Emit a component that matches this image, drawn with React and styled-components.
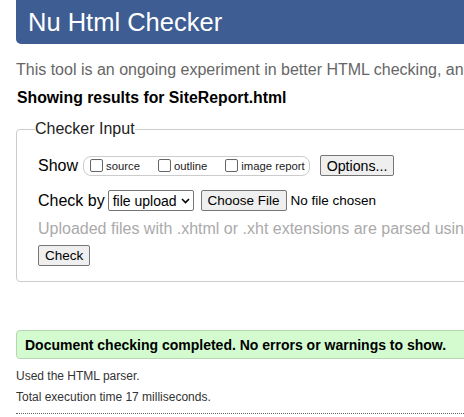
import React from "react";
import styled, { createGlobalStyle } from "styled-components";

const GlobalStyle = createGlobalStyle`
  html, body {
    margin: 0;
    padding: 0;
    background: #fff;
    overflow: hidden;
  }
  body {
    font-family: "Liberation Sans", Arial, sans-serif;
    color: #000;
  }
`;

const Page = styled.div`
  width: 640px;
  padding: 0 0 0 16px;
`;

const Header = styled.h1`
  margin: 0;
  height: 44px;
  padding: 0 12px;
  display: flex;
  align-items: center;
  background: #3e5d92;
  color: #fff;
  font-size: 25.5px;
  font-weight: normal;
  border-radius: 0 0 0 5px;
`;

const Intro = styled.p`
  margin: 17px 0 0;
  font-size: 16px;
  color: #666;
  white-space: nowrap;
`;

const Results = styled.p`
  margin: 10px 0 0 1px;
  font-size: 15.8px;
  font-weight: bold;
`;

const Fieldset = styled.fieldset`
  margin: 13px 0 0;
  padding: 6px 20px 15px 21px;
  border: 1px solid #ccc;
  border-radius: 4px;
  width: 560px;
`;

const Legend = styled.legend`
  padding: 0;
  margin-left: -3px;
  font-size: 16px;
  color: #222;
`;

const Row = styled.div`
  display: flex;
  align-items: center;
  font-size: 16px;
  margin-top: ${(p) => p.$top || 0}px;
`;

const Pill = styled.span`
  display: inline-flex;
  align-items: center;
  height: 18px;
  margin-left: 5px;
  padding: 0 4px 0 6px;
  border: 1px solid #ccc;
  border-radius: 8px;
  gap: 18px;
`;

const Opt = styled.label`
  display: inline-flex;
  align-items: center;
  font-size: 11.3px;
  color: #222;
`;

const Box = styled.span`
  display: inline-block;
  width: 11px;
  height: 11px;
  border: 1px solid #666;
  border-radius: 2px;
  margin-right: 3px;
  background: #fff;
`;

const Button = styled.span`
  display: inline-flex;
  align-items: center;
  height: 19px;
  padding: 0 6px;
  border: 1px solid #767676;
  border-radius: 2px;
  background: #efefef;
  font-size: ${(p) => p.$size || 14}px;
  color: #000;
  margin-left: ${(p) => p.$left || 0}px;
`;

const Select = styled.span`
  display: inline-flex;
  align-items: center;
  height: 19px;
  padding: 0 3px 0 4px;
  margin-left: 3px;
  border: 1px solid #767676;
  border-radius: 2px;
  font-size: 14px;
  gap: 4px;
`;

const FileName = styled.span`
  margin-left: 4px;
  font-size: 13.5px;
`;

const Hint = styled.p`
  margin: 9px 0 0;
  font-size: 16px;
  color: #aaa;
  white-space: nowrap;
`;

const Success = styled.p`
  margin: 48px 0 0;
  height: 27px;
  padding: 0 8px;
  display: flex;
  align-items: center;
  background: #d3fbcf;
  border: 1px solid #b5d6b1;
  border-radius: 4px;
  font-size: 14px;
  font-weight: bold;
`;

const Note = styled.p`
  margin: ${(p) => p.$top || 0}px 0 0;
  font-size: 12px;
  color: #333;
`;

const Rule = styled.hr`
  margin: 9px 0 0;
  border: none;
  border-top: 1px dotted #666;
`;

const Chevron = () => (
  <svg width="9" height="6" viewBox="0 0 9 6">
    <path d="M1 1l3.5 3.5L8 1" fill="none" stroke="#000" strokeWidth="1.6" />
  </svg>
);

export default function App() {
  return (
    <Page>
      <GlobalStyle />
      <Header>Nu Html Checker</Header>
      <Intro>This tool is an ongoing experiment in better HTML checking, and its behavior remains subject to change</Intro>
      <Results>Showing results for SiteReport.html</Results>
      <Fieldset>
        <Legend>Checker Input</Legend>
        <Row $top={11}>
          Show
          <Pill>
            <Opt><Box />source</Opt>
            <Opt><Box />outline</Opt>
            <Opt><Box />image report</Opt>
          </Pill>
          <Button $left={10} $size={14.2}>Options...</Button>
        </Row>
        <Row $top={14}>
          Check by
          <Select>file upload <Chevron /></Select>
          <Button $left={7} $size={13.5}>Choose File</Button>
          <FileName>No file chosen</FileName>
        </Row>
        <Hint>Uploaded files with .xhtml or .xht extensions are parsed using the XML parser.</Hint>
        <Row $top={7}>
          <Button $size={13.5}>Check</Button>
        </Row>
      </Fieldset>
      <Success>Document checking completed. No errors or warnings to show.</Success>
      <Note $top={10}>Used the HTML parser.</Note>
      <Note $top={7}>Total execution time 17 milliseconds.</Note>
      <Rule />
    </Page>
  );
}
